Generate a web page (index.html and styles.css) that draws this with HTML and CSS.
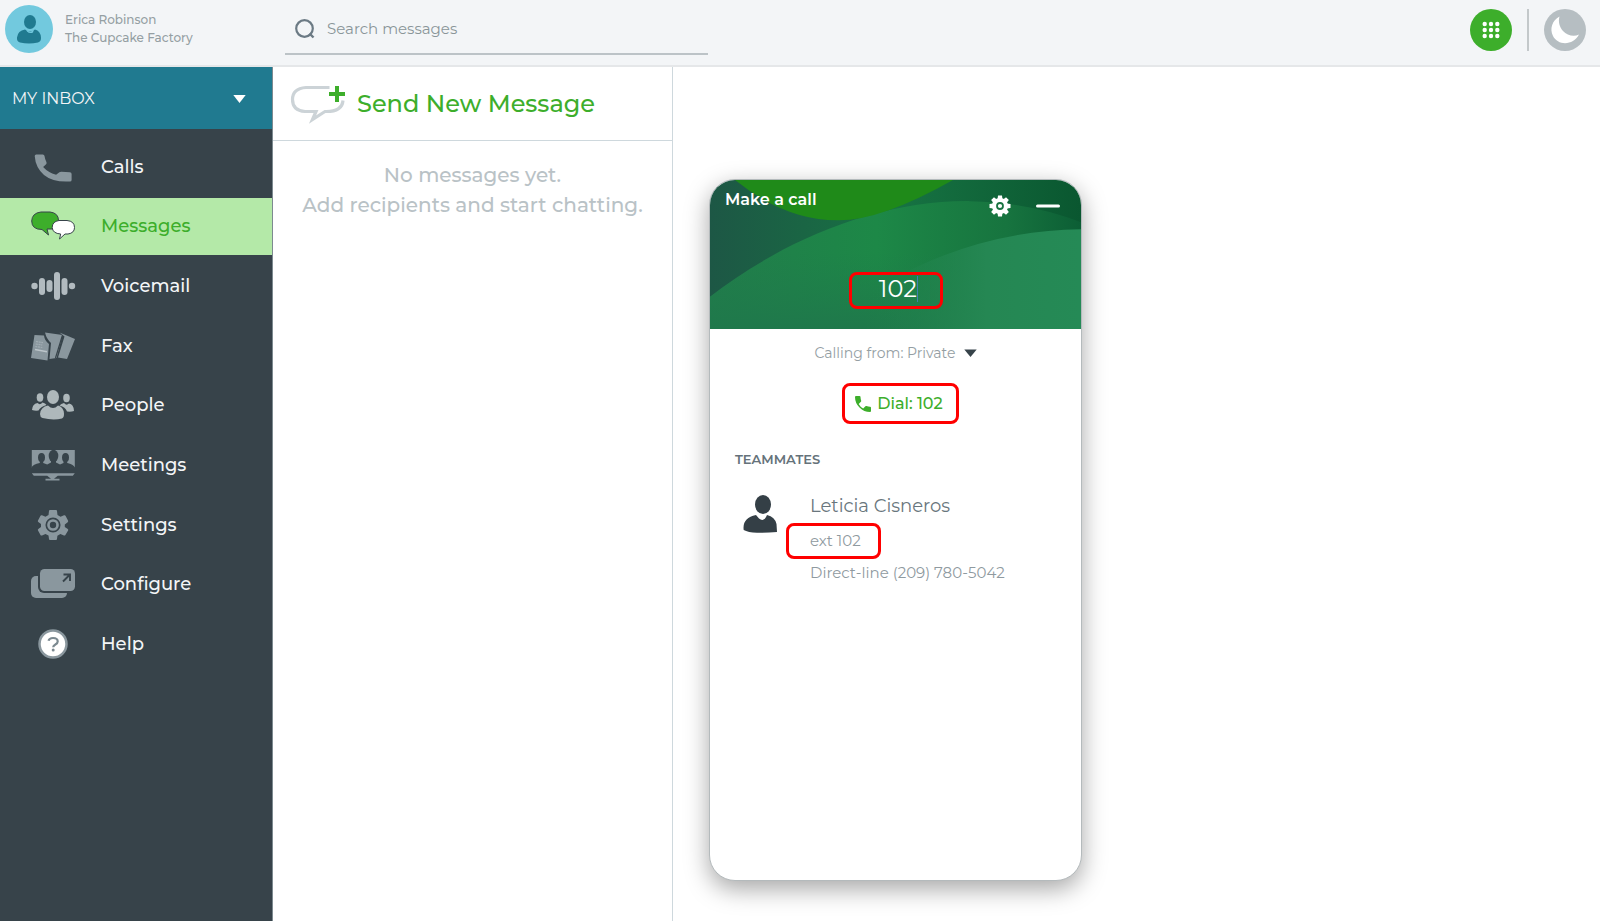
FILE: index.html
```html
<!DOCTYPE html>
<html lang="en">
<head>
<meta charset="utf-8">
<meta name="viewport" content="width=device-width, initial-scale=1">
<title>Messages</title>
<link rel="stylesheet" href="styles.css">
</head>
<body>
<header class="topbar">
  <div class="account">
    <svg class="avatar" viewBox="0 0 48 48" aria-hidden="true">
      <circle cx="24" cy="24" r="24" fill="#72c9de"/>
      <ellipse cx="25" cy="17" rx="6" ry="7" fill="#207a90"/>
      <path d="M20 24.500q5 4 10 0q5.500 1.500 6 8q.3 4-3 5q-9 2-18 0q-3.500-1-3-5q.8-7 8-8z" fill="#207a90"/>
      <path d="M21 24q4.500 5.500 8 0l-1 3.500q-3.500 1.500-6-1z" fill="#72c9de"/>
    </svg>
    <div class="account-text">
      <span>Erica Robinson</span>
      <span>The Cupcake Factory</span>
    </div>
  </div>
  <label class="search">
    <svg class="search-icon" viewBox="0 0 20 20" aria-hidden="true">
      <circle cx="9.500" cy="9.500" r="8.300" fill="none" stroke="#6b7a84" stroke-width="2.200"/>
      <path d="M14.500 14.500l4 4" stroke="#6b7a84" stroke-width="2.400"/>
    </svg>
    <input class="search-input" type="text" placeholder="Search messages" aria-label="Search messages">
  </label>
  <div class="top-actions">
    <button class="round-btn" type="button" aria-label="Dialpad">
      <svg viewBox="0 0 42 42">
        <circle cx="21" cy="21" r="21" fill="#3dae2b"/>
        <g fill="#fff">
          <circle cx="14.700" cy="15" r="2.200"/><circle cx="21" cy="15" r="2.200"/><circle cx="27.300" cy="15" r="2.200"/>
          <circle cx="14.700" cy="21" r="2.200"/><circle cx="21" cy="21" r="2.200"/><circle cx="27.300" cy="21" r="2.200"/>
          <circle cx="14.700" cy="27" r="2.200"/><circle cx="21" cy="27" r="2.200"/><circle cx="27.300" cy="27" r="2.200"/>
        </g>
      </svg>
    </button>
    <span class="divider"></span>
    <button class="round-btn" type="button" aria-label="Do not disturb">
      <svg viewBox="0 0 42 42">
        <circle cx="21" cy="21" r="21" fill="#b6bec2"/>
        <path d="M15.500 7.500C8 11.500 5.500 20 9 27C14 37 29.500 36.500 35 25.500C30 28 23 26.500 19 22C15.500 18 14 12.500 15.500 7.500z" fill="#fff"/>
      </svg>
    </button>
  </div>
</header>

<div class="layout">
  <aside class="sidebar">
    <button class="inbox" type="button">
      <span>MY INBOX</span>
      <svg class="caret" viewBox="0 0 13 8" aria-hidden="true"><path d="M.3 1h12.400L6.500 9z" fill="#fff"/></svg>
    </button>
    <nav class="nav">
      <a class="nav-item" href="#calls">
        <svg class="nav-icon" viewBox="0 0 44 32" fill="#8a979e"><path d="M3.700 5Q3.700 3.500 5.200 3.500h6.600q1.500 0 1.700 1.500q.5 3.500 1.900 6q.6 1.300-.3 2.200l-3 2.800q5 5.500 13 7.800l3.300-2.500q.8-.7 2-.6l8.500.6q1.700.1 1.700 1.700v6q0 1.500-1.700 1.500Q22 31.500 13 24Q4.500 16.500 3.700 5z"/></svg>
        <span>Calls</span>
      </a>
      <a class="nav-item is-active" href="#messages" aria-current="page">
        <svg class="nav-icon" viewBox="0 0 44 32" stroke="#37434a" stroke-linejoin="round">
          <path d="M10 2h9q8.500 1 8.500 8.500q0 6-5.500 8.500h-6l1.500 6l-6.500-5.500Q.7 19.500.7 11Q1 3 10 2z" fill="#3dae2b"/>
          <path d="M28 10.500h8q7.500.7 7.500 7q0 5.500-6.500 6.500h-3l-5.500 5l1.200-5q-8-.5-8.500-6.500q0-6 6.800-7z" fill="#fff"/>
        </svg>
        <span>Messages</span>
      </a>
      <a class="nav-item" href="#voicemail">
        <svg class="nav-icon" viewBox="0 0 44 32" fill="#b2bbc0">
          <circle cx="3.500" cy="16" r="3.200"/><rect x="8" y="8" width="6" height="17" rx="3"/><rect x="15.500" y="10" width="6" height="12" rx="3"/>
          <rect x="23" y="2" width="6" height="28" rx="3"/><rect x="30.500" y="8" width="6" height="17" rx="3"/><circle cx="41" cy="16" r="3.200"/>
        </svg>
        <span>Voicemail</span>
      </a>
      <a class="nav-item" href="#fax">
        <svg class="nav-icon" viewBox="0 0 44 32" fill="#8a979e">
          <path d="M3.500 5L13 5.500q.5 5 5 8.500L16.500 30.500L0 28z"/>
          <path d="M14 2.500l17.500 2.500l-6 23l-7 1l1.500-16q-4.500-4-6-10.500z"/>
          <path d="M28.500 2.500l15.500 6.500l-8 20l-9-1.500l6.500-21z"/>
          <path d="M5 11.500l7 1.200M4.800 14l6.500 1M4.300 16.500l7 1" stroke="#a3aeb4" stroke-width="1.200" stroke-dasharray="2 .7"/>
          <path d="M4 19.500l12 2.300" stroke="#bcc5ca" stroke-width="1.500"/>
          <path d="M31.500 5l-7 23" stroke="#37434a" stroke-width="1.200"/>
        </svg>
        <span>Fax</span>
      </a>
      <a class="nav-item" href="#people">
        <svg class="nav-icon" viewBox="0 0 44 32" fill="#aeb8bb">
          <ellipse cx="22" cy="8" rx="6" ry="7"/><ellipse cx="9" cy="8.500" rx="3.300" ry="4.200"/><ellipse cx="35.500" cy="9" rx="3.300" ry="4.200"/>
          <path d="M1 21q.3-6 5.500-7q2.500 2.500 5-.5q3 .5 4 2.500q-6 1.500-8 5.500q-3.500.5-6.500-.5zM43 22q-.3-7-5-7.500q-2.500 2.500-5-.5q-3 .5-4.500 2.500q6 1.500 7.500 6q4 .5 7-.5z"/>
          <path d="M17 16.500q5 5 10 0q5.500 1.500 6 8q.2 4-2 5q-9 2-19.500-.5q-2.500-.8-2.500-4q.5-7 8-8.500z"/>
        </svg>
        <span>People</span>
      </a>
      <a class="nav-item" href="#meetings">
        <svg class="nav-icon" viewBox="0 0 44 32">
          <path d="M.8 1h43v18h-43z" fill="#8a979e"/>
          <g fill="#37434a">
            <ellipse cx="10.500" cy="8.500" rx="3.500" ry="4.500"/><ellipse cx="22.500" cy="7" rx="4.800" ry="6.200"/><ellipse cx="34.500" cy="8.500" rx="3.500" ry="4.500"/>
            <path d="M8.800 10h3.400v4l4 1.500l3.800-2V10h5v3.500l4 2l3.500-1.500v-4h3.700v4q6 1 7.800 4.500v2H.5v-2q1.500-3.500 8.300-4.500z"/>
          </g>
          <path d="M.8 24.300h43l-2 2.400h-15l-3.800 3.100h5.500v1.600h-14v-1.600h5.500l-3.800-3.100H2.800z" fill="#8a979e"/>
        </svg>
        <span>Meetings</span>
      </a>
      <a class="nav-item" href="#settings">
        <svg class="nav-icon" viewBox="0 0 44 32">
          <path d="M18 2q0-1 1-1h6q1 0 1 1l.5 4l3 1.700L33 6.300q1-.4 1.500.5L37 11.500q.5 1-.3 1.700L33.800 15.500v2.500l3 2q.8.600.3 1.500l-2.700 4.500q-.5.900-1.500.5l-3.500-1.500l-3 1.700l-.4 3.300q-.1 1-1 1h-6q-1 0-1-1l-.5-3.500l-3-1.500l-3.500 1.500q-1 .4-1.500-.5L7 21.500q-.5-.9.300-1.500l2.700-2v-3L7.300 13q-.8-.6-.3-1.500l2.500-4.700q.5-.9 1.500-.5l3.500 1.400l3-1.700z" fill="#8a979e"/>
          <circle cx="22" cy="16" r="6.700" fill="none" stroke="#37434a" stroke-width="1.700"/>
          <circle cx="22" cy="16" r="3.200" fill="#37434a"/>
        </svg>
        <span>Settings</span>
      </a>
      <a class="nav-item" href="#configure">
        <svg class="nav-icon" viewBox="0 0 44 32">
          <rect y="8" width="36" height="22" rx="5" fill="#8a979e"/>
          <rect x="7" y="0" width="38" height="25" rx="6" fill="#37434a"/>
          <rect x="9" y="1" width="35" height="22" rx="4.500" fill="#8a979e"/>
          <path d="M32 13.500l7-7M32.500 6.500h6.500v6.500" fill="none" stroke="#37434a" stroke-width="1.900"/>
        </svg>
        <span>Configure</span>
      </a>
      <a class="nav-item" href="#help">
        <svg class="nav-icon" viewBox="0 0 44 32">
          <circle cx="22" cy="16" r="13.500" fill="#fff" stroke="#8a979e" stroke-width="2.500"/>
          <path d="M17.500 12.800q.8-2.800 4.500-2.800q4.700 0 4.700 3.400q0 1.800-2.300 3q-2.200 1.200-2.200 2.800" fill="none" stroke="#7b8990" stroke-width="2.200"/>
          <circle cx="22.200" cy="22" r="1.500" fill="#7b8990"/>
        </svg>
        <span>Help</span>
      </a>
    </nav>
  </aside>

  <section class="threads">
    <button class="new-message" type="button">
      <svg class="new-icon" viewBox="0 0 54 38" aria-hidden="true">
        <path d="M38.500 2.500H15Q1.500 3.500 1.500 14.500Q1.500 25.500 14 26.500h11l-3.500 8l12.500-8q17 .5 18-11" fill="none" stroke="#ccd3d7" stroke-width="3.200"/>
        <path d="M44 1h4v6h6v4h-6v6h-4v-6h-6V7h6z" fill="#3dae2b"/>
      </svg>
      <span>Send New Message</span>
    </button>
    <p class="empty">No messages yet.<br>Add recipients and start chatting.</p>
  </section>

  <main class="content">
    <section class="phone">
      <div class="phone-head">
        <svg class="waves" viewBox="0 0 371 148" preserveAspectRatio="none" aria-hidden="true">
          <defs>
            <linearGradient id="base" x1="0" x2="1"><stop offset="0" stop-color="#1d5745"/><stop offset=".5" stop-color="#177343"/><stop offset="1" stop-color="#0a5730"/></linearGradient>
            <linearGradient id="mid" x1="0" y1="0" x2="1" y2="0"><stop offset="0" stop-color="#217c4b"/><stop offset=".45" stop-color="#1d8847"/><stop offset=".8" stop-color="#17743f"/><stop offset="1" stop-color="#0c5e35"/></linearGradient>
            <linearGradient id="low" x1="0" y1="0" x2="1" y2="0"><stop offset=".2" stop-color="#1f824a" stop-opacity="0"/><stop offset=".65" stop-color="#258753"/><stop offset="1" stop-color="#258a56"/></linearGradient>
            <linearGradient id="deep" x1="0" y1="0" x2="0" y2="1"><stop offset=".4" stop-color="#1f7b4b" stop-opacity="0"/><stop offset="1" stop-color="#1f784b"/></linearGradient>
          </defs>
          <path d="M0 0h371v148H0z" fill="url(#base)"/>
          <path d="M0 116C70 62 165 20 260 21Q320 22 371 42V148H0z" fill="url(#mid)"/>
          <path d="M0 116C70 62 165 20 260 21Q320 22 371 42V148H0z" fill="url(#deep)"/>
          <path d="M180 100Q270 50 371 49V148H100Q130 122 180 100z" fill="url(#low)"/>
          <path d="M25 0Q75 40 127 40Q170 41 243 0z" fill="#1f8a19"/>
        </svg>
        <div class="phone-bar">
          <h2 class="phone-title">Make a call</h2>
          <div class="phone-tools">
            <button class="tool" type="button" aria-label="Call settings">
              <svg viewBox="0 0 22 22">
                <g fill="#fff"><circle cx="11" cy="11" r="8"/>
                <path d="M9 .5h4l.5 4h-5zM9 21.500h4l.5-4h-5zM.5 9v4l4 .5v-5zM21.500 9v4l-4 .5v-5z"/>
                <path d="M9 .5h4l.5 4h-5zM9 21.500h4l.5-4h-5zM.5 9v4l4 .5v-5zM21.500 9v4l-4 .5v-5z" transform="rotate(45 11 11)"/></g>
                <circle cx="11" cy="11" r="3" fill="none" stroke="#1a7442" stroke-width="1.800"/>
              </svg>
            </button>
            <button class="tool" type="button" aria-label="Minimize">
              <svg viewBox="0 0 24 22"><path d="M1.500 11h21" stroke="#fff" stroke-width="3" stroke-linecap="round"/></svg>
            </button>
          </div>
        </div>
        <div class="marked number">
          <input class="number-input" type="text" value="102" aria-label="Number to call"><span class="cursor"></span>
        </div>
      </div>
      <div class="phone-body">
        <button class="from" type="button">
          <span>Calling from: Private</span>
          <svg class="caret" viewBox="0 0 13 8" aria-hidden="true"><path d="M.3 .5h12.400L6.500 8z" fill="#37434a"/></svg>
        </button>
        <button class="marked dial" type="button">
          <svg class="dial-icon" viewBox="0 0 18 18" aria-hidden="true"><path d="M1 2q0-1 1-1h3.500q1 0 1 1q.1 2 .7 3.700q.2.600-.3 1.100L4.700 9q1.600 3 4.500 4.500l2.200-2.200q.5-.5 1.100-.3q1.700.6 3.500.7q1 0 1 1V16q0 1-1 1Q10 17 5.500 12.500Q1 8 1 2z" fill="#3dae2b"/></svg>
          <span>Dial: 102</span>
        </button>
        <h3 class="group">TEAMMATES</h3>
        <article class="mate">
          <svg class="mate-icon" viewBox="0 0 34 38" aria-hidden="true" fill="#343f46">
            <ellipse cx="20" cy="9.500" rx="8" ry="9.500"/>
            <path d="M13 20l3 3.500q5 4 8-3.500q8 2 9.500 9l.5 8q-11 1-20 .8Q5 37.500.7 35Q-1 23 13 20z"/>
          </svg>
          <div class="mate-info">
            <span class="mate-name">Leticia Cisneros</span>
            <span class="marked ext">ext 102</span>
            <span class="direct">Direct-line (209) 780-5042</span>
          </div>
        </article>
      </div>
    </section>
  </main>
</div>
</body>
</html>
```
FILE: styles.css
```css
* { box-sizing: border-box; }
body {
  margin: 0;
  min-height: 100vh;
  display: flex;
  flex-direction: column;
  background: #fff;
  color: #6b777e;
  font-family: Montserrat, Inter, "Open Sans", sans-serif;
  font-size: 16px;
}
button, input { font: inherit; color: inherit; }
button { background: none; border: 0; padding: 0; cursor: pointer; }
input { background: none; border: 0; padding: 0; outline: 0; min-width: 0; }
svg { display: block; flex: none; overflow: visible; }
h2, h3, p { margin: 0; }

.topbar {
  display: flex;
  height: 67px;
  background: #f3f5f7;
  border-bottom: 2px solid #e5e7e9;
}
.account { display: flex; gap: 12px; width: 285px; padding: 5px; flex: none; }
.avatar { width: 48px; height: 48px; }
.account-text {
  display: flex;
  flex-direction: column;
  padding-top: 6px;
  font-size: 12px;
  font-weight: 500;
  line-height: 18px;
  color: #959fa3;
}
.search {
  display: flex;
  align-items: center;
  gap: 12px;
  flex: 0 1 423px;
  height: 55px;
  padding: 4px 10px 0;
  border-bottom: 2px solid #bcc3c7;
}
.search-icon { width: 20px; height: 20px; }
.search-input { flex: 1; font-size: 15px; color: #8a9599; }
.search-input::placeholder { color: #8a9599; opacity: 1; }
.top-actions {
  display: flex;
  align-items: center;
  gap: 15px;
  margin-left: auto;
  padding: 0 14px 6px 0;
}
.round-btn svg { width: 42px; height: 42px; }
.divider { width: 2px; height: 42px; background: #c3c8ca; }

.layout { display: flex; flex: 1; }
.sidebar { width: 273px; flex: none; background: #37434a; border-right: 1px solid #7d8a90; }
.inbox {
  display: flex;
  align-items: center;
  justify-content: space-between;
  width: 100%;
  height: 62px;
  padding: 0 26px 0 12px;
  background: #207a90;
  color: #f3f5f7;
}
.caret { width: 13px; height: 8px; }
.nav {
  display: grid;
  grid-auto-rows: 1fr;
  gap: 2px;
  height: 535px;
  margin-top: 9px;
}
.nav-item {
  display: flex;
  align-items: center;
  gap: 26px;
  padding-left: 31px;
  color: #f3f5f7;
  font-size: 18px;
  font-weight: 500;
  text-decoration: none;
}
.nav-icon { width: 44px; height: 32px; }
.is-active { background: #b4e9a8; color: #3dae2b; }

.threads { width: 400px; flex: none; border-right: 1px solid #ced8dd; }
.new-message {
  display: flex;
  align-items: center;
  gap: 12px;
  width: 100%;
  height: 74px;
  padding-left: 18px;
  border-bottom: 1px solid #ced8dd;
  color: #3dae2b;
  font-size: 24px;
  font-weight: 500;
}
.new-icon { width: 54px; height: 38px; }
.empty {
  padding-top: 19px;
  text-align: center;
  color: #b9c2c6;
  font-size: 20px;
  font-weight: 500;
  line-height: 30px;
}

.content { flex: 1; min-width: 0; padding: 112px 36px 40px; }
.phone {
  max-width: 373px;
  min-height: 702px;
  overflow: hidden;
  background: #fff;
  border: 1px solid #b4babc;
  border-radius: 26px;
  box-shadow: 0 8px 24px rgba(0, 0, 0, .35);
}
.phone-head {
  position: relative;
  display: flex;
  flex-direction: column;
  align-items: center;
  height: 149px;
  color: #fff;
}
.waves { position: absolute; inset: 0; width: 100%; height: 100%; }
.phone-bar {
  position: relative;
  display: flex;
  justify-content: space-between;
  width: 100%;
  height: 92px;
  padding: 8px 21px 0 15px;
}
.phone-title { font-size: 16px; font-weight: 600; line-height: 24px; }
.phone-tools { display: flex; gap: 24px; height: 22px; margin-top: 7px; }
.tool svg { width: 24px; height: 22px; }
.marked { border: 3px solid #f00; border-radius: 8px; }
.number {
  position: relative;
  display: flex;
  align-items: center;
  justify-content: center;
  width: 94px;
  height: 37px;
  padding-bottom: 3px;
}
.number-input { width: 44px; font-size: 24px; line-height: 28px; text-align: right; }
.cursor { width: 1px; height: 26px; background: #3f7fb0; }

.phone-body { display: flex; flex-direction: column; padding: 14px 25px; }
.from {
  display: flex;
  align-items: center;
  justify-content: center;
  gap: 8px;
  height: 20px;
  font-size: 14px;
  color: #949ea3;
}
.dial {
  display: flex;
  align-items: center;
  justify-content: center;
  align-self: center;
  gap: 5px;
  width: 117px;
  height: 41px;
  margin: 20px 0 0 10px;
  padding-right: 4px;
  color: #3dae2b;
  font-size: 16px;
  font-weight: 500;
}
.dial-icon { width: 18px; height: 18px; }
.group { margin-top: 25px; font-size: 13px; font-weight: 600; line-height: 20px; color: #65727a; }
.mate { display: flex; gap: 33px; padding: 23px 0 0 8px; }
.mate-icon { width: 34px; height: 38px; margin-top: 3px; }
.mate-info {
  display: flex;
  flex-direction: column;
  align-items: flex-start;
  font-size: 15px;
  color: #8f9a9f;
}
.mate-name { font-size: 18px; line-height: 28px; color: #69767d; }
.ext { width: 95px; margin: 3px 0 0 -24px; padding-left: 21px; line-height: 30px; }
.direct { line-height: 28px; }
```
